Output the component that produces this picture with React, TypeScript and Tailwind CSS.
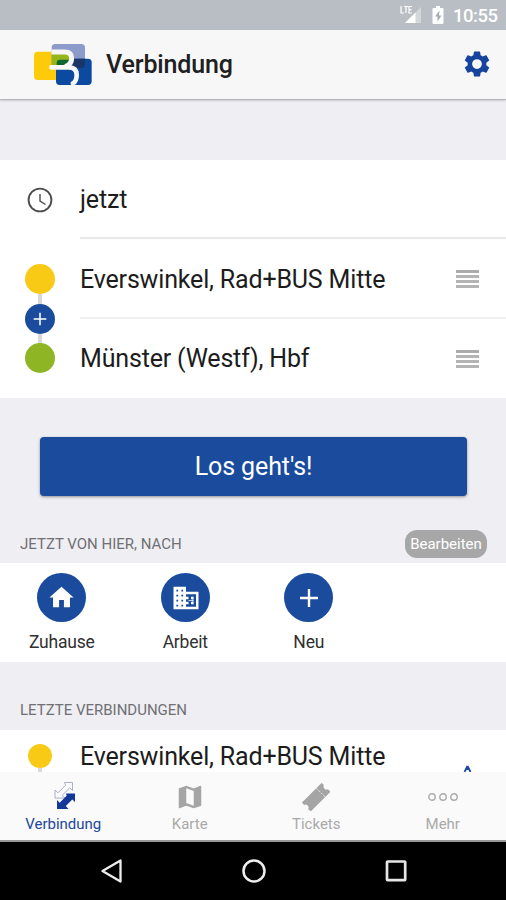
import type { ReactNode } from "react";

const BLUE = "#1b4b9d";

function Logo() {
  return (
    <svg className="h-[42px] w-[58px]" viewBox="42 42 174 126">
      <rect x="42" y="65" width="80" height="85" rx="11" fill="#fdcb0a" />
      <rect x="95" y="42" width="100" height="74" rx="11" fill="#8d9bcb" />
      <rect x="108" y="86" width="107" height="79" rx="11" fill="#0b4a9e" />
      <path d="M95 66h52v40H95z" fill="#94b71c" />
      <path d="M110 107V99q0-10 10-10h27v18z" fill="#12652c" />
      <path d="M150 86h45v17q0 11-11 11h-34z" fill="#1a3568" />
      <path d="M94 66h40c15 0 21 8 21 19 0 13-8 22-20 25" fill="none" stroke="#f7f7f7" strokeWidth="15" />
      <path d="M94 112h52c17 0 24 9 24 23 0 15-4 21-11 25" fill="none" stroke="#f7f7f7" strokeWidth="14" strokeLinecap="round" />
    </svg>
  );
}

function StatusBar() {
  return (
    <div className="flex h-[30px] shrink-0 items-center justify-end bg-[#b9bec4] pr-[9px] text-white">
      <svg className="h-[18px] w-[22px]" viewBox="0 0 22 18">
        <path d="M5 17 21 1v16z" fill="#fff" fillOpacity=".4" />
        <path d="M5 17 15.500 6.500V17z" fill="#fff" />
        <path d="M1 0v7h3M4 .5h4M6 .5V7M12 .5H9V7h3M9 3.700h2.500" fill="none" stroke="#fff" strokeWidth="1.200" />
      </svg>
      <svg className="ml-[10px] h-[18px] w-[12px]" viewBox="0 0 12 18">
        <path d="M4 0h4v2h2.500q1 0 1 1v14q0 1-1 1h-9q-1 0-1-1V3q0-1 1-1H4z" fill="#fff" />
        <path d="m7.500 4.500-4.500 6h2.500V15.500l4-6H7z" fill="#a5abb2" />
      </svg>
      <span className="ml-[9px] w-[44px] whitespace-nowrap pt-[1px] text-[18.500px] font-medium leading-[30px] tracking-[-0.5px]">10:55</span>
    </div>
  );
}

function Header() {
  return (
    <header className="z-10 flex h-[70px] shrink-0 items-center border-b border-[#b5b5b7] bg-[#f7f7f7] pl-[34px] pr-[14px] shadow-[0_1px_2px_rgba(0,0,0,0.15)]">
      <Logo />
      <h1 className="ml-[14px] flex-1 pt-[1px] text-[25px] font-medium leading-[30px] tracking-[-0.15px] text-[#202020]">Verbindung</h1>
      <svg className="mb-[1px] h-[30px] w-[30px]" viewBox="0 0 24 24" fill="#14449b">
        <path
          fillRule="evenodd"
          d="M19.43 12.98c.04-.32.07-.64.07-.98s-.03-.66-.07-.98l2.11-1.65c.19-.15.24-.42.12-.64l-2-3.46c-.12-.22-.39-.3-.61-.22l-2.49 1c-.52-.4-1.080-.73-1.690-.98l-.38-2.650C14.460 2.180 14.250 2 14 2h-4c-.25 0-.46.18-.49.42l-.38 2.650c-.61.25-1.170.59-1.690.98l-2.490-1c-.23-.09-.49 0-.61.22l-2 3.460c-.13.22-.07.49.12.64l2.110 1.650c-.04.32-.07.65-.07.98s.03.66.07.98l-2.110 1.650c-.19.15-.24.42-.12.64l2 3.460c.12.22.39.3.61.22l2.490-1c.52.4 1.080.73 1.690.98l.38 2.650c.03.24.24.42.49.42h4c.25 0 .46-.18.49-.42l.38-2.650c.61-.25 1.170-.59 1.690-.98l2.490 1c.23.09.49 0 .61-.22l2-3.460c.12-.22.07-.49-.12-.64zM12 15.900a3.900 3.900 0 1 1 0-7.800 3.900 3.900 0 0 1 0 7.800z"
        />
      </svg>
    </header>
  );
}

function Plus({ className, stroke }: { className: string; stroke: number }) {
  return (
    <svg className={className} viewBox="0 0 20 20">
      <path d="M10 1v18M1 10h18" stroke="#fff" strokeWidth={stroke} />
    </svg>
  );
}

function Grip() {
  return (
    <div className="flex w-[23px] flex-col gap-[2px]">
      <i className="h-[3px] bg-[#acacac]" />
      <i className="h-[3px] bg-[#b4b4b4]" />
      <i className="h-[3px] bg-[#b4b4b4]" />
      <i className="h-[3px] bg-[#b4b4b4]" />
    </div>
  );
}

function SearchForm() {
  return (
    <section className="h-[238px] shrink-0 bg-white">
      <div className="flex h-[79px]">
        <div className="flex w-20 items-center justify-center">
          <svg className="h-[26px] w-[26px]" viewBox="0 0 26 26" fill="none" stroke="#4c4c4c">
            <circle cx="13" cy="13" r="11.400" strokeWidth="1.900" />
            <path d="M13 7v7l5.500 3.500" strokeWidth="1.400" />
          </svg>
        </div>
        <div className="flex flex-1 items-center border-b-2 border-[#e9e9ec] pt-[3px] text-[25px] tracking-[-0.15px] text-[#1c1c1c]">jetzt</div>
      </div>
      <div className="flex h-[159px]">
        <div className="flex w-20 flex-col items-center pt-[25px]">
          <div className="h-[30px] w-[30px] shrink-0 rounded-full bg-[#f9ca15]" />
          <div className="h-[10px] w-[4px] bg-[#d9d9dc]" />
          <div className="flex h-[30px] w-[30px] shrink-0 items-center justify-center rounded-full bg-[#1b4b9d]">
            <Plus className="h-[14px] w-[14px]" stroke={2.2} />
          </div>
          <div className="h-[9px] w-[4px] bg-[#d9d9dc]" />
          <div className="h-[30px] w-[30px] shrink-0 rounded-full bg-[#8db524]" />
        </div>
        <div className="flex flex-1 flex-col text-[25px] tracking-[-0.17px] text-[#1c1c1c]">
          <div className="flex h-[80px] items-center justify-between border-b-2 border-[#efeff1] pr-[27px] pt-[2px]">
            <span className="whitespace-nowrap pt-[2px]">Everswinkel, Rad+BUS Mitte</span>
            <Grip />
          </div>
          <div className="flex h-[79px] items-center justify-between pr-[27px]">
            <span className="whitespace-nowrap">Münster (Westf), Hbf</span>
            <Grip />
          </div>
        </div>
      </div>
    </section>
  );
}

function Shortcut({ label, children }: { label: string; children: ReactNode }) {
  return (
    <div className="flex w-[123.500px] flex-col items-center">
      <div className="flex h-[49px] w-[49px] items-center justify-center rounded-full bg-[#1b4b9d]">{children}</div>
      <span className="mt-[9px] text-[17.500px] leading-[22px] tracking-[-0.2px] text-[#303030]">{label}</span>
    </div>
  );
}

function Shortcuts() {
  return (
    <section className="flex h-[99px] shrink-0 bg-white pt-[10px]">
      <Shortcut label="Zuhause">
        <svg className="h-[29px] w-[29px]" viewBox="0 0 24 24" fill="#fff">
          <path d="M10 20v-6h4v6h5v-8h3L12 3 2 12h3v8z" />
        </svg>
      </Shortcut>
      <Shortcut label="Arbeit">
        <svg className="ml-px h-[30px] w-[30px]" viewBox="0 0 24 24" fill="#fff">
          <path d="M12 7V3H2v18h20V7H12zM5.700 18.700H4.300v-1.400h1.400v1.400zm0-4H4.300v-1.400h1.400v1.400zm0-4H4.300V9.300h1.400v1.400zm0-4H4.300V5.300h1.400v1.400zm4 12H8.300v-1.400h1.400v1.400zm0-4H8.300v-1.400h1.400v1.400zm0-4H8.300V9.300h1.400v1.400zm0-4H8.300V5.300h1.400v1.400zM20 19h-8v-2h2v-2h-2v-2h2v-2h-2V9h8v10zm-2-8h-2v2h2v-2zm0 4h-2v2h2v-2z" />
          <path d="M14 14h4M17.500 11v6" stroke="#fff" strokeWidth=".6" />
        </svg>
      </Shortcut>
      <Shortcut label="Neu">
        <Plus className="h-[20px] w-[20px]" stroke={2.4} />
      </Shortcut>
    </section>
  );
}

function Tab({ label, active = false, children }: { label: string; active?: boolean; children: ReactNode }) {
  return (
    <div className="flex flex-1 flex-col items-center pt-[9px]">
      <div className="flex h-[32px] items-center justify-center">{children}</div>
      <span className={active ? "text-[15px] leading-[22px] text-[#21489b]" : "text-[15px] leading-[22px] text-[#a9a9a9]"}>{label}</span>
    </div>
  );
}

function TabBar() {
  return (
    <nav className="flex h-[70px] shrink-0 border-b-2 border-[#97999b] bg-[#fafafa]">
      <Tab label="Verbindung" active>
        <svg className="ml-[2px] h-[32px] w-[24px]" viewBox="0 0 24 32">
          <path d="M12.500 1.500h8v8l-2.700-2.700-7.600 7.600 2.700 2.700H3V9.100l3 2.700 7.600-7.600z" fill="#fafafa" stroke="#989dbd" strokeWidth=".8" />
          <path d="M14 12.500h9v8.500l-2.700-2.500-6.500 6.500 2.700 3H5v-9l2.700 2.700 6.900-6.900z" fill="#14389a" />
        </svg>
      </Tab>
      <Tab label="Karte">
        <svg className="h-[30px] w-[30px]" viewBox="0 0 24 24" fill="#a5a5a5">
          <path d="M20.500 3l-.16.030L15 5.100 9 3 3.360 4.900c-.21.070-.36.250-.36.480V20.500c0 .28.220.5.5.5l.16-.030L9 18.900l6 2.100 5.640-1.900c.21-.070.360-.250.360-.480V3.500c0-.28-.220-.5-.5-.5zM15 19l-6-2.110V5l6 2.110V19z" />
        </svg>
      </Tab>
      <Tab label="Tickets">
        <svg className="h-[28px] w-[28px]" viewBox="0 0 28 28">
          <g transform="rotate(-45 14 14)">
            <path d="M0 8h28V11.300a2.900 2.900 0 0 0 0 5.600V20.500H0V16.900a2.900 2.900 0 0 0 0-5.600z" fill="#a5a5a5" />
            <path d="M20.500 8v12" stroke="#fafafa" strokeWidth=".8" strokeDasharray="2 1.300" />
          </g>
        </svg>
      </Tab>
      <Tab label="Mehr">
        <svg className="h-[8px] w-[30px]" viewBox="0 0 30 8" fill="none" stroke="#aaa" strokeWidth="1.400">
          <circle cx="4" cy="4" r="3.200" />
          <circle cx="15" cy="4" r="3.200" />
          <circle cx="26" cy="4" r="3.200" />
        </svg>
      </Tab>
    </nav>
  );
}

function SystemNav() {
  return (
    <div className="flex h-[58px] shrink-0 items-center bg-black pl-[100px]">
      <svg className="h-[26px] w-[24px]" viewBox="0 0 24 26" fill="none" stroke="#eee" strokeWidth="2.300" strokeLinejoin="round">
        <path d="M2.500 13 20.500 2.500v21z" />
      </svg>
      <svg className="ml-[117px] h-[26px] w-[26px]" viewBox="0 0 26 26" fill="none" stroke="#eee" strokeWidth="2.500">
        <circle cx="13" cy="13" r="10.500" />
      </svg>
      <svg className="ml-[117px] h-[24px] w-[24px]" viewBox="0 0 24 24" fill="none" stroke="#e6e6e6" strokeWidth="2.700">
        <rect x="3" y="2.500" width="18.200" height="18.600" rx=".6" />
      </svg>
    </div>
  );
}

export default function App() {
  return (
    <div className="flex h-[900px] w-[506px] flex-col overflow-hidden bg-[#efeef3] font-['Roboto',sans-serif]">
      <StatusBar />
      <Header />
      <main className="flex h-[672px] shrink-0 flex-col overflow-hidden pt-[60px]">
        <SearchForm />
        <div className="h-[132px] shrink-0 px-[39.500px] pt-[39px]">
          <button className="h-[59px] w-full rounded-[4px] bg-[#1b4b9d] pl-[1px] text-[25px] tracking-[-0.1px] text-white shadow-[0_1px_3px_rgba(0,0,0,0.4)]">Los geht's!</button>
        </div>
        <div className="flex h-[33px] shrink-0 items-start justify-between pl-5 pr-[19px]">
          <h2 className="pt-[4px] text-[15px] leading-[20px] text-[#707073]">JETZT VON HIER, NACH</h2>
          <button className="h-[28px] w-[82px] rounded-[12px] bg-[#a7a7a7] text-[15px] text-white">Bearbeiten</button>
        </div>
        <Shortcuts />
        <h2 className="h-[68px] shrink-0 pl-5 pt-[38px] text-[15px] leading-[20px] text-[#707073]">LETZTE VERBINDUNGEN</h2>
        <section className="flex h-[42px] shrink-0 overflow-hidden bg-white">
          <div className="flex w-20 flex-col items-center pt-[14px]">
            <div className="h-[24px] w-[24px] shrink-0 rounded-full bg-[#f9ca15]" />
            <div className="h-[4px] w-[4px] bg-[#d9d9dc]" />
          </div>
          <span className="flex-1 whitespace-nowrap pt-[12px] text-[25px] leading-[30px] tracking-[-0.17px] text-[#1c1c1c]">Everswinkel, Rad+BUS Mitte</span>
          <svg className="mr-[34px] mt-[35px] h-[7px] w-[9px]" viewBox="0 0 9 7">
            <path d="M4.500 1 1.500 7M4.500 1l3 6M4.500 1v4" stroke={BLUE} strokeWidth="1.800" />
          </svg>
        </section>
      </main>
      <TabBar />
      <SystemNav />
    </div>
  );
}
